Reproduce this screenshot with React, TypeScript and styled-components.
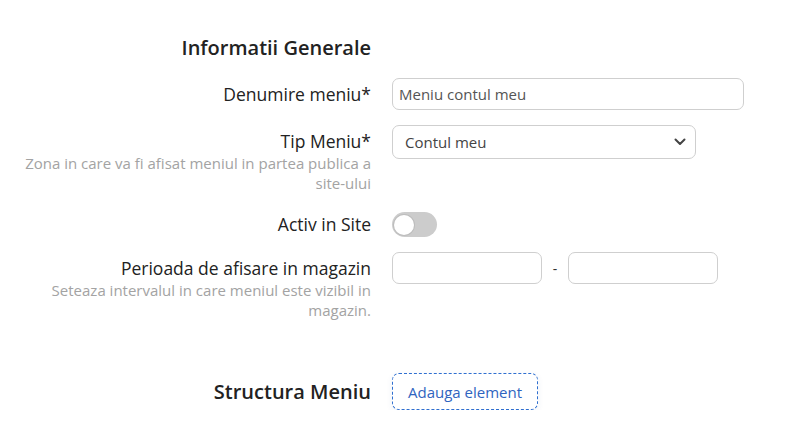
import React from "react";
import styled, { createGlobalStyle } from "styled-components";

const Global = createGlobalStyle`
  html, body { margin: 0; padding: 0; background: #fff; }
  body { font-family: "Open Sans", "Noto Sans", sans-serif; color: #222; }
  * { box-sizing: border-box; }
`;

const Page = styled.div`
  width: 794px;
  padding-top: 34px;
`;

const Section = styled.section<{ $gap?: number }>`
  display: flex;
  flex-direction: column;
  margin-top: ${(p) => p.$gap ?? 0}px;
`;

const Row = styled.div<{ $mb?: number }>`
  display: grid;
  grid-template-columns: 355px auto;
  column-gap: 21px;
  padding-left: 16px;
  align-items: start;
  margin-bottom: ${(p) => p.$mb ?? 0}px;
`;

const HeadingRow = styled(Row)`
  align-items: center;
`;

const Heading = styled.h2`
  margin: 0;
  text-align: right;
  font-size: 20px;
  line-height: 28px;
  font-weight: 600;
  color: #222;
`;

const LabelCol = styled.div<{ $pt?: number }>`
  text-align: right;
  padding-top: ${(p) => p.$pt ?? 4}px;
`;

const Label = styled.div`
  font-size: 17.5px;
  line-height: 24px;
  color: #222;
`;

const Help = styled.div`
  font-size: 15px;
  line-height: 20px;
  color: #a3a3a3;
`;

const TextInput = styled.input<{ $w: number }>`
  width: ${(p) => p.$w}px;
  height: 32px;
  border: 1px solid #cfcfcf;
  border-radius: 7px;
  padding: 0 6px;
  font-family: "Open Sans", "Noto Sans", sans-serif;
  font-size: 15px;
  color: #555;
  outline: none;
  background: #fff;
`;

const SelectWrap = styled.div`
  position: relative;
  width: 304px;
  height: 34px;
`;

const Select = styled.select`
  appearance: none;
  -webkit-appearance: none;
  width: 100%;
  height: 100%;
  border: 1px solid #cfcfcf;
  border-radius: 7px;
  padding: 0 12px;
  font-family: "Open Sans", "Noto Sans", sans-serif;
  font-size: 15px;
  color: #444;
  background: #fff;
  outline: none;
`;

const Chevron = styled.svg`
  position: absolute;
  right: 10px;
  top: 13px;
  pointer-events: none;
`;

const Toggle = styled.div`
  width: 45px;
  height: 25px;
  border-radius: 13px;
  background: #cccccc;
  display: flex;
  align-items: center;
  padding-left: 2px;
`;

const Knob = styled.div`
  width: 20px;
  height: 20px;
  border-radius: 50%;
  background: #fff;
  box-shadow: 0 0 0 1px #bdbdbd;
`;

const RangeRow = styled.div`
  display: flex;
  align-items: center;
`;

const Dash = styled.span`
  width: 26px;
  text-align: center;
  font-size: 14px;
  color: #333;
`;

const AddButton = styled.button`
  width: 146px;
  height: 37px;
  border: 1px dashed #2f6fd0;
  border-radius: 7px;
  background: #fff;
  box-shadow: 0 2px 6px rgba(40, 80, 140, 0.08);
  font-family: "Open Sans", "Noto Sans", sans-serif;
  font-size: 15px;
  color: #2f64c0;
  cursor: pointer;
`;

export default function App() {
  return (
    <Page>
      <Global />
      <Section>
        <HeadingRow $mb={16}>
          <Heading>Informatii Generale</Heading>
          <span />
        </HeadingRow>
        <Row $mb={15}>
          <LabelCol>
            <Label>Denumire meniu*</Label>
          </LabelCol>
          <TextInput $w={352} defaultValue="Meniu contul meu" />
        </Row>
        <Row $mb={19}>
          <LabelCol>
            <Label>Tip Meniu*</Label>
            <Help>Zona in care va fi afisat meniul in partea publica a site-ului</Help>
          </LabelCol>
          <SelectWrap>
            <Select defaultValue="cont">
              <option value="cont">Contul meu</option>
            </Select>
            <Chevron width="12" height="8" viewBox="0 0 12 8">
              <path d="M1.5 1.5 L6 6 L10.5 1.5" fill="none" stroke="#444" strokeWidth="2" strokeLinecap="round" strokeLinejoin="round" />
            </Chevron>
          </SelectWrap>
        </Row>
        <Row $mb={15}>
          <LabelCol $pt={0}>
            <Label>Activ in Site</Label>
          </LabelCol>
          <Toggle>
            <Knob />
          </Toggle>
        </Row>
        <Row>
          <LabelCol>
            <Label>Perioada de afisare in magazin</Label>
            <Help>Seteaza intervalul in care meniul este vizibil in magazin.</Help>
          </LabelCol>
          <RangeRow>
            <TextInput $w={150} />
            <Dash>-</Dash>
            <TextInput $w={150} />
          </RangeRow>
        </Row>
      </Section>
      <Section $gap={53}>
        <HeadingRow>
          <Heading>Structura Meniu</Heading>
          <AddButton>Adauga element</AddButton>
        </HeadingRow>
      </Section>
    </Page>
  );
}
